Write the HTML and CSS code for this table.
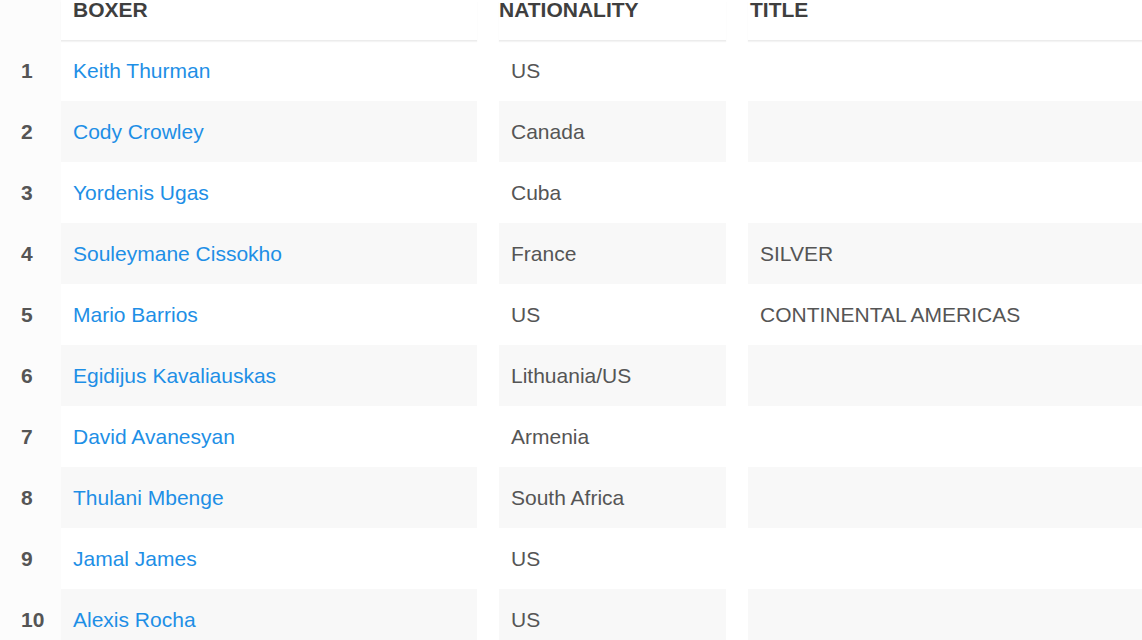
FILE: index.html
```html
<!DOCTYPE html>
<html lang="en">
<head>
<meta charset="utf-8">
<title>Rankings</title>
<link rel="stylesheet" href="styles.css">
</head>
<body>
<div class="ranking">
  <div class="row head">
    <div class="rank"></div>
    <div class="cells">
      <div class="cell">BOXER</div>
      <div class="cell nat">NATIONALITY</div>
      <div class="cell ttl">TITLE</div>
    </div>
  </div>
  <div class="row"><div class="rank">1</div><div class="cells"><div class="cell"><a href="#">Keith Thurman</a></div><div class="cell">US</div><div class="cell"></div></div></div>
  <div class="row alt"><div class="rank">2</div><div class="cells"><div class="cell"><a href="#">Cody Crowley</a></div><div class="cell">Canada</div><div class="cell"></div></div></div>
  <div class="row"><div class="rank">3</div><div class="cells"><div class="cell"><a href="#">Yordenis Ugas</a></div><div class="cell">Cuba</div><div class="cell"></div></div></div>
  <div class="row alt"><div class="rank">4</div><div class="cells"><div class="cell"><a href="#">Souleymane Cissokho</a></div><div class="cell">France</div><div class="cell">SILVER</div></div></div>
  <div class="row"><div class="rank">5</div><div class="cells"><div class="cell"><a href="#">Mario Barrios</a></div><div class="cell">US</div><div class="cell">CONTINENTAL AMERICAS</div></div></div>
  <div class="row alt"><div class="rank">6</div><div class="cells"><div class="cell"><a href="#">Egidijus Kavaliauskas</a></div><div class="cell">Lithuania/US</div><div class="cell"></div></div></div>
  <div class="row"><div class="rank">7</div><div class="cells"><div class="cell"><a href="#">David Avanesyan</a></div><div class="cell">Armenia</div><div class="cell"></div></div></div>
  <div class="row alt"><div class="rank">8</div><div class="cells"><div class="cell"><a href="#">Thulani Mbenge</a></div><div class="cell">South Africa</div><div class="cell"></div></div></div>
  <div class="row"><div class="rank">9</div><div class="cells"><div class="cell"><a href="#">Jamal James</a></div><div class="cell">US</div><div class="cell"></div></div></div>
  <div class="row alt"><div class="rank">10</div><div class="cells"><div class="cell"><a href="#">Alexis Rocha</a></div><div class="cell">US</div><div class="cell"></div></div></div>
</div>
</body>
</html>
```
FILE: styles.css
```css
html, body {
  margin: 0;
  padding: 0;
  background: #fff;
}
body {
  font-family: "Liberation Sans", Arial, sans-serif;
  font-size: 21px;
  color: #555;
  overflow: hidden;
}
.ranking {
  display: flex;
  flex-direction: column;
  width: 1142px;
}
.row {
  display: flex;
  height: 61px;
}
.rank {
  width: 61px;
  flex: none;
  background: #fcfcfc;
  font-weight: bold;
  color: #555;
  padding-left: 21px;
  box-sizing: border-box;
  display: flex;
  align-items: center;
}
.cells {
  flex: 1;
  display: grid;
  grid-template-columns: 416px 227px 1fr;
  column-gap: 22px;
}
.cell {
  padding: 0 12px;
  display: flex;
  align-items: center;
  white-space: nowrap;
}
.row.alt .cell {
  background: #f8f8f8;
}
.cell a {
  color: #1e8fe6;
  text-decoration: none;
}
.row.head {
  height: 40px;
}
.head .cell {
  align-items: flex-start;
  line-height: 20px;
  font-weight: bold;
  color: #3f3f3f;
  box-shadow: 0 1px 0 #ececec, 0 2px 1px #f4f4f4;
}
.head .cell.nat {
  padding-left: 0;
}
.head .cell.ttl {
  padding-left: 2px;
}
```
